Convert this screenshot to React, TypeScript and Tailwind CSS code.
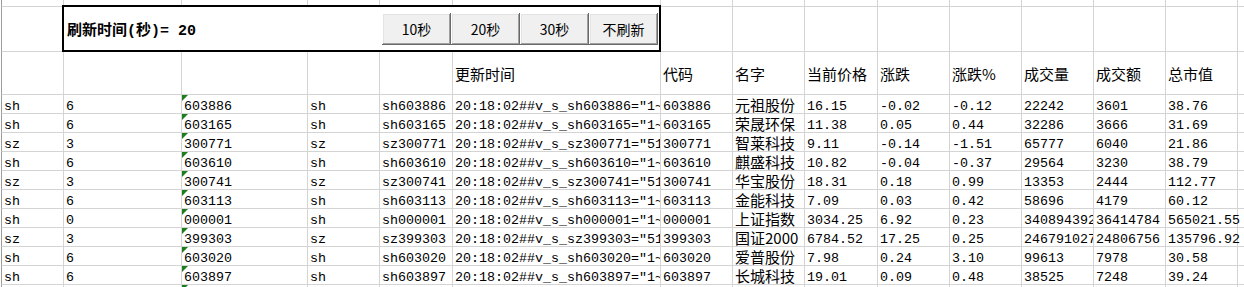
import React from 'react';

type Row = string[];

const rows: Row[] = [
  ['sh', '6', '603886', 'sh', 'sh603886', '20:18:02##v_s_sh603886="1~', '603886', '元祖股份', '16.15', '-0.02', '-0.12', '22242', '3601', '38.76'],
  ['sh', '6', '603165', 'sh', 'sh603165', '20:18:02##v_s_sh603165="1~', '603165', '荣晟环保', '11.38', '0.05', '0.44', '32286', '3666', '31.69'],
  ['sz', '3', '300771', 'sz', 'sz300771', '20:18:02##v_s_sz300771="51', '300771', '智莱科技', '9.11', '-0.14', '-1.51', '65777', '6040', '21.86'],
  ['sh', '6', '603610', 'sh', 'sh603610', '20:18:02##v_s_sh603610="1~', '603610', '麒盛科技', '10.82', '-0.04', '-0.37', '29564', '3230', '38.79'],
  ['sz', '3', '300741', 'sz', 'sz300741', '20:18:02##v_s_sz300741="51', '300741', '华宝股份', '18.31', '0.18', '0.99', '13353', '2444', '112.77'],
  ['sh', '6', '603113', 'sh', 'sh603113', '20:18:02##v_s_sh603113="1~', '603113', '金能科技', '7.09', '0.03', '0.42', '58696', '4179', '60.12'],
  ['sh', '0', '000001', 'sh', 'sh000001', '20:18:02##v_s_sh000001="1~', '000001', '上证指数', '3034.25', '6.92', '0.23', '340894392', '36414784', '565021.55'],
  ['sz', '3', '399303', 'sz', 'sz399303', '20:18:02##v_s_sz399303="51', '399303', '国证2000', '6784.52', '17.25', '0.25', '246791027', '24806756', '135796.92'],
  ['sh', '6', '603020', 'sh', 'sh603020', '20:18:02##v_s_sh603020="1~', '603020', '爱普股份', '7.98', '0.24', '3.10', '99613', '7978', '30.58'],
  ['sh', '6', '603897', 'sh', 'sh603897', '20:18:02##v_s_sh603897="1~', '603897', '长城科技', '19.01', '0.09', '0.48', '38525', '7248', '39.24'],
  ['', '', '', '', '', '', '', '', '', '', '', '', '', ''],
];

const headers = ['', '', '', '', '', '更新时间', '代码', '名字', '当前价格', '涨跌', '涨跌%', '成交量', '成交额', '总市值', ''];

const grid = 'border-r border-b border-[#d4d4d4]';

const Triangle = () => (
  <div className="absolute left-0 top-0 w-[6px] h-[6px] bg-[#1b7d1b] [clip-path:polygon(0_0,100%_0,0_100%)]" />
);

const Button = ({ label }: { label: string }) => (
  <button className="w-[69px] h-[32px] bg-[#f0f0f0] text-[14px] text-black font-['Noto_Sans_CJK_SC',sans-serif] leading-none [box-shadow:inset_-1px_-1px_#696969,inset_1px_1px_#ffffff,inset_-2px_-2px_#a0a0a0,inset_2px_2px_#e3e3e3]">
    {label}
  </button>
);

export default function App() {
  return (
    <div className="w-[1244px] h-[287px] overflow-hidden bg-white text-black">
      <div className="ml-px grid grid-cols-[63px_118px_126px_72px_73px_208px_72px_72px_73px_72px_72px_72px_72px_72px_72px] grid-rows-[7px_45px_43px_repeat(11,19px)]">
        {/* row 1 */}
        {headers.map((_, i) => (
          <div key={`r0-${i}`} className={`${grid} ${i === 0 ? 'border-l border-l-[#9c9c9c]' : ''}`} />
        ))}

        {/* row 2: refresh panel */}
        <div className={`${grid} border-l border-l-[#9c9c9c]`} />
        <div className={`${grid} col-span-5 relative flex items-center pl-[3px] pr-[2px]`}>
          <div className="absolute -left-[2px] -top-[2px] -right-px -bottom-px border-2 border-black pointer-events-none" />
          <span className="pt-[4px] text-[15px] font-bold font-['Liberation_Mono','Noto_Sans_CJK_SC',monospace] leading-none">
            刷新时间(秒)= 20
          </span>
          <div className="ml-auto flex">
            <Button label="10秒" />
            <Button label="20秒" />
            <Button label="30秒" />
            <Button label="不刷新" />
          </div>
        </div>
        {headers.slice(6).map((_, i) => (
          <div key={`r1-${i}`} className={grid} />
        ))}

        {/* row 3: headers */}
        {headers.map((h, i) => (
          <div
            key={`h-${i}`}
            className={`${grid} ${i === 0 ? 'border-l border-l-[#9c9c9c]' : ''} flex items-center pt-[3px] pl-[2px] text-[15px] font-['Noto_Sans_CJK_SC',sans-serif] whitespace-nowrap overflow-hidden`}
          >
            {h}
          </div>
        ))}

        {/* data rows */}
        {rows.map((r, ri) => (
          <React.Fragment key={`row-${ri}`}>
            {r.map((v, ci) => {
              const isName = ci === 7;
              const font = isName
                ? "font-['Noto_Sans_CJK_SC',sans-serif] text-[15px] pt-[2px] leading-[15px]"
                : "font-['Liberation_Mono','Noto_Sans_CJK_SC',monospace] text-[13.33px] pt-[5px] leading-[13px]";
              return (
                <div
                  key={`c-${ri}-${ci}`}
                  className={`${grid} ${ci === 0 ? 'border-l border-l-[#9c9c9c]' : ''} relative pl-[2px] whitespace-nowrap ${ci === 13 ? 'overflow-visible' : 'overflow-hidden'} ${font}`}
                >
                  {ci === 2 && <Triangle />}
                  {v}
                </div>
              );
            })}
            <div className={grid} />
          </React.Fragment>
        ))}
      </div>
    </div>
  );
}
